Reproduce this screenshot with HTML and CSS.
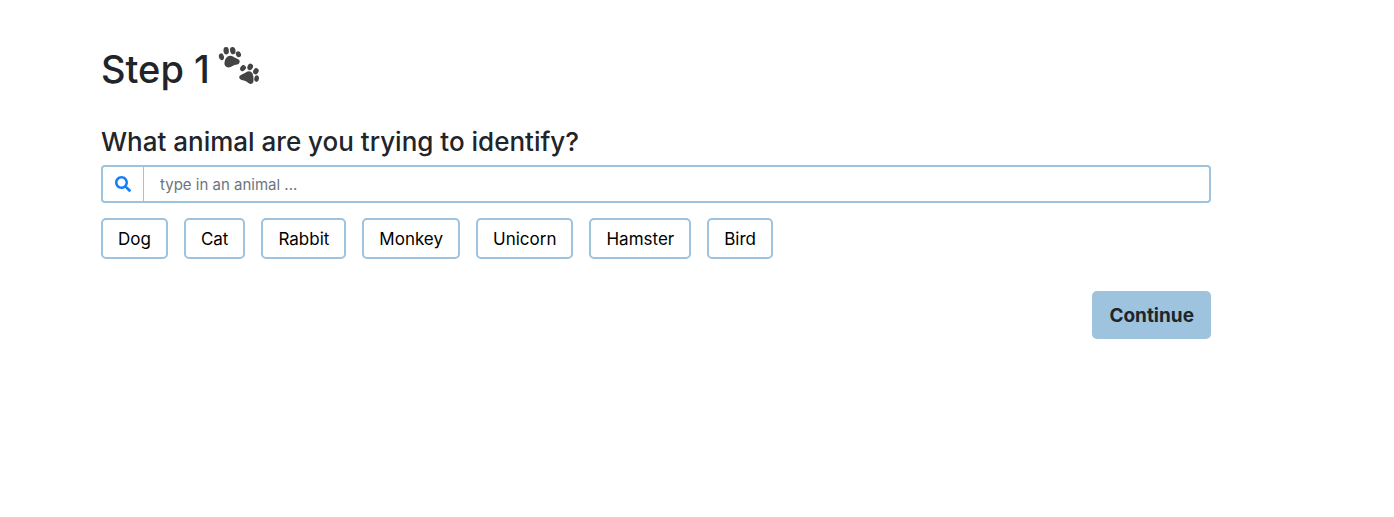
FILE: index.html
```html
<!DOCTYPE html>
<html lang="en">
<head>
<meta charset="utf-8">
<meta name="viewport" content="width=device-width, initial-scale=1">
<title>Identify an animal</title>
<link rel="stylesheet" href="styles.css">
</head>
<body>
<main class="page">
  <h1 class="title">Step 1
    <svg class="paws" viewBox="6 6 42 39" aria-hidden="true">
      <ellipse cx="9.4" cy="16.8" rx="2.5" ry="3.5" transform="rotate(-12 9.4 16.8)"/>
      <ellipse cx="14.2" cy="10.8" rx="2.7" ry="3.7" transform="rotate(-5 14.2 10.8)"/>
      <ellipse cx="20.8" cy="10.6" rx="2.7" ry="3.7" transform="rotate(-12 20.8 10.6)"/>
      <ellipse cx="26.4" cy="14.2" rx="2.5" ry="3" transform="rotate(-25 26.4 14.2)"/>
      <path d="M15.3 16.7C17.2 15.6 19.6 15.4 21.3 16.7C22.8 17.9 25.5 18.4 27 19.7C28.6 21.6 27.3 24.2 24.8 24.6C21.5 24.9 19.4 27.5 16.7 27.5C13.8 27.5 12.1 25.3 12.5 22.6C12.8 20.5 13.5 17.9 15.3 16.7Z"/>
      <ellipse cx="31" cy="28.2" rx="2.6" ry="3.2" transform="rotate(40 31 28.2)"/>
      <ellipse cx="38.2" cy="26.9" rx="2.7" ry="3.3" transform="rotate(25 38.2 26.9)"/>
      <ellipse cx="43.9" cy="31.3" rx="2.6" ry="3.2" transform="rotate(30 43.9 31.3)"/>
      <ellipse cx="44.6" cy="38.6" rx="2.3" ry="3.3" transform="rotate(8 44.6 38.6)"/>
      <path d="M34.8 31.8C36.5 30.5 39.3 31.2 40.4 33.3C41.2 35.2 41.5 37 41.5 39C41.7 41.8 41.2 43.8 38.8 43.9C36.4 43.9 35.2 41.3 32.7 40.7C30.2 40.3 27.4 39.7 27.2 37.3C27.3 34.6 32.7 33.9 34.8 31.8Z"/>
    </svg>
  </h1>
  <label class="question" for="animal">What animal are you trying to identify?</label>
  <div class="search">
    <span class="search-icon">
      <svg class="glass" viewBox="0 0 512 512" aria-hidden="true"><path d="M505 442.700L405.300 343c-4.500-4.500-10.600-7-17-7H372c27.600-35.300 44-79.700 44-128C416 93.100 322.900 0 208 0S0 93.100 0 208s93.100 208 208 208c48.300 0 92.700-16.400 128-44v16.300c0 6.400 2.500 12.500 7 17l99.700 99.700c9.400 9.400 24.600 9.400 33.900 0l28.300-28.300c9.400-9.400 9.400-24.600.1-34zM208 336c-70.700 0-128-57.200-128-128 0-70.700 57.200-128 128-128 70.700 0 128 57.200 128 128 0 70.700-57.200 128-128 128z"/></svg>
    </span>
    <input class="search-input" id="animal" type="text" placeholder="type in an animal ...">
  </div>
  <div class="choices">
    <button class="choice" type="button">Dog</button>
    <button class="choice" type="button">Cat</button>
    <button class="choice" type="button">Rabbit</button>
    <button class="choice" type="button">Monkey</button>
    <button class="choice" type="button">Unicorn</button>
    <button class="choice" type="button">Hamster</button>
    <button class="choice" type="button">Bird</button>
  </div>
  <div class="actions">
    <button class="continue" type="button">Continue</button>
  </div>
</main>
</body>
</html>
```
FILE: styles.css
```css
* {
  box-sizing: border-box;
}

body {
  margin: 0;
  background: #fff;
  color: #212529;
  font-family: Inter, "Liberation Sans", sans-serif;
}

.page {
  max-width: 1227px;
  padding: 45px 16px 45px 101px;
}

.title {
  display: flex;
  gap: 8px;
  margin: 0 0 32px;
  font-size: 38px;
  font-weight: 500;
  line-height: 48px;
}

.paws {
  width: 42px;
  height: 39px;
  margin-top: 1px;
  fill: #444;
}

.question {
  display: block;
  margin-bottom: 6px;
  font-size: 26px;
  font-weight: 500;
  line-height: 34px;
}

.search {
  display: flex;
  height: 38px;
  border: 2px solid #9dc3df;
  border-radius: 4px;
}

.search-icon {
  display: flex;
  align-items: center;
  padding: 0 12px;
  border-right: 1px solid #9dc3df;
}

.glass {
  width: 16px;
  height: 16px;
  fill: #147efb;
}

.search-input {
  flex: 1;
  min-width: 0;
  padding: 0 16px;
  border: 0;
  outline: 0;
  background: transparent;
  color: #495057;
  font: inherit;
  font-size: 15px;
}

.search-input::placeholder {
  color: #6c757d;
  opacity: 1;
}

.choices {
  display: flex;
  flex-wrap: wrap;
  gap: 16px;
  margin-top: 15px;
}

.choice {
  padding: 1px 15px 0;
  border: 2px solid #9dc3df;
  border-radius: 5px;
  background: #fff;
  color: #000;
  font: inherit;
  font-size: 17px;
  line-height: 36px;
}

.actions {
  display: flex;
  justify-content: flex-end;
  margin-top: 32px;
}

.continue {
  padding: 1px 17px 0;
  border: 0;
  border-radius: 5px;
  background: #9dc3df;
  color: #212529;
  font: inherit;
  font-size: 19px;
  font-weight: 700;
  line-height: 47px;
}
```
